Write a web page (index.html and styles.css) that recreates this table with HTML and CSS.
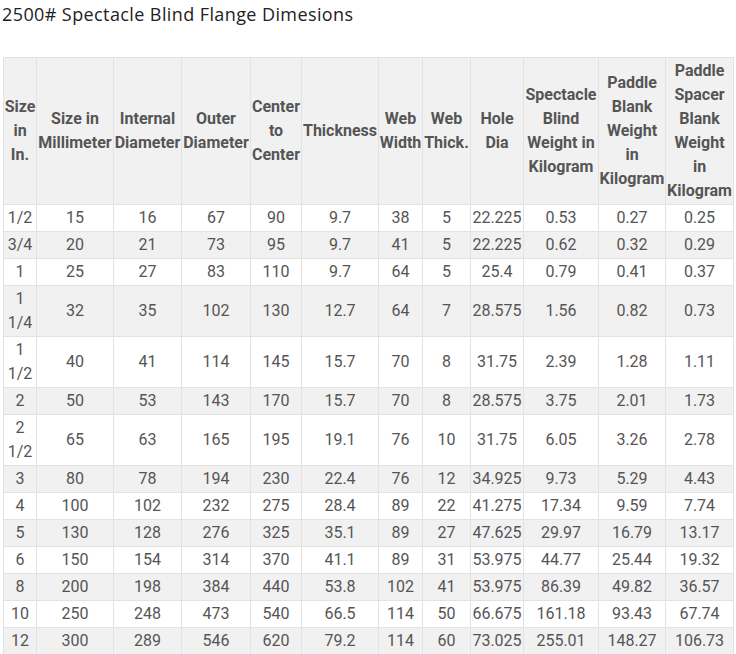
FILE: index.html
```html
<!DOCTYPE html>
<html>
<head>
<meta charset="utf-8">
<link rel="stylesheet" href="styles.css">
</head>
<body>
<h3 class="title">2500# Spectacle Blind Flange Dimesions</h3>
<table class="dims">
<colgroup>
<col class="c1"><col class="c2"><col class="c3"><col class="c4"><col class="c5"><col class="c6"><col class="c7"><col class="c8"><col class="c9"><col class="c10"><col class="c11"><col class="c12">
</colgroup>
<thead>
<tr>
<th>Size<br>in<br>In.</th>
<th>Size in<br>Millimeter</th>
<th>Internal<br>Diameter</th>
<th>Outer<br>Diameter</th>
<th>Center<br>to<br>Center</th>
<th>Thickness</th>
<th>Web<br>Width</th>
<th>Web<br>Thick.</th>
<th>Hole<br>Dia</th>
<th>Spectacle<br>Blind<br>Weight in<br>Kilogram</th>
<th>Paddle<br>Blank<br>Weight<br>in<br>Kilogram</th>
<th>Paddle<br>Spacer<br>Blank<br>Weight<br>in<br>Kilogram</th>
</tr>
</thead>
<tbody>
<tr><td>1/2</td><td>15</td><td>16</td><td>67</td><td>90</td><td>9.7</td><td>38</td><td>5</td><td>22.225</td><td>0.53</td><td>0.27</td><td>0.25</td></tr>
<tr><td>3/4</td><td>20</td><td>21</td><td>73</td><td>95</td><td>9.7</td><td>41</td><td>5</td><td>22.225</td><td>0.62</td><td>0.32</td><td>0.29</td></tr>
<tr><td>1</td><td>25</td><td>27</td><td>83</td><td>110</td><td>9.7</td><td>64</td><td>5</td><td>25.4</td><td>0.79</td><td>0.41</td><td>0.37</td></tr>
<tr><td>1<br>1/4</td><td>32</td><td>35</td><td>102</td><td>130</td><td>12.7</td><td>64</td><td>7</td><td>28.575</td><td>1.56</td><td>0.82</td><td>0.73</td></tr>
<tr><td>1<br>1/2</td><td>40</td><td>41</td><td>114</td><td>145</td><td>15.7</td><td>70</td><td>8</td><td>31.75</td><td>2.39</td><td>1.28</td><td>1.11</td></tr>
<tr><td>2</td><td>50</td><td>53</td><td>143</td><td>170</td><td>15.7</td><td>70</td><td>8</td><td>28.575</td><td>3.75</td><td>2.01</td><td>1.73</td></tr>
<tr><td>2<br>1/2</td><td>65</td><td>63</td><td>165</td><td>195</td><td>19.1</td><td>76</td><td>10</td><td>31.75</td><td>6.05</td><td>3.26</td><td>2.78</td></tr>
<tr><td>3</td><td>80</td><td>78</td><td>194</td><td>230</td><td>22.4</td><td>76</td><td>12</td><td>34.925</td><td>9.73</td><td>5.29</td><td>4.43</td></tr>
<tr><td>4</td><td>100</td><td>102</td><td>232</td><td>275</td><td>28.4</td><td>89</td><td>22</td><td>41.275</td><td>17.34</td><td>9.59</td><td>7.74</td></tr>
<tr><td>5</td><td>130</td><td>128</td><td>276</td><td>325</td><td>35.1</td><td>89</td><td>27</td><td>47.625</td><td>29.97</td><td>16.79</td><td>13.17</td></tr>
<tr><td>6</td><td>150</td><td>154</td><td>314</td><td>370</td><td>41.1</td><td>89</td><td>31</td><td>53.975</td><td>44.77</td><td>25.44</td><td>19.32</td></tr>
<tr><td>8</td><td>200</td><td>198</td><td>384</td><td>440</td><td>53.8</td><td>102</td><td>41</td><td>53.975</td><td>86.39</td><td>49.82</td><td>36.57</td></tr>
<tr><td>10</td><td>250</td><td>248</td><td>473</td><td>540</td><td>66.5</td><td>114</td><td>50</td><td>66.675</td><td>161.18</td><td>93.43</td><td>67.74</td></tr>
<tr><td>12</td><td>300</td><td>289</td><td>546</td><td>620</td><td>79.2</td><td>114</td><td>60</td><td>73.025</td><td>255.01</td><td>148.27</td><td>106.73</td></tr>
</tbody>
</table>
</body>
</html>
```
FILE: styles.css
```css
html, body {
  margin: 0;
  padding: 0;
  background: #fff;
}
body {
  padding: 0 3px;
}
.title {
  margin: 0 0 0 -1px;
  padding: 4px 0 0 0;
  height: 57px;
  box-sizing: border-box;
  font-family: "Open Sans", "Noto Sans", sans-serif;
  font-weight: 400;
  font-size: 18px;
  letter-spacing: 0.4px;
  line-height: 20px;
  color: #222;
}
.dims {
  border-collapse: collapse;
  table-layout: fixed;
  width: 730px;
  font-family: Roboto, "Liberation Sans", sans-serif;
  font-size: 16px;
  line-height: 24px;
  color: #555;
}
.c1 { width: 33px; }
.c2 { width: 77px; }
.c3 { width: 68px; }
.c4 { width: 69px; }
.c5 { width: 51px; }
.c6 { width: 77px; }
.c7 { width: 44px; }
.c8 { width: 48px; }
.c9 { width: 53px; }
.c10 { width: 75px; }
.c11 { width: 67px; }
.c12 { width: 68px; }
.dims th, .dims td {
  border: 1px solid #e2e2e2;
  padding: 1px 0;
  text-align: center;
  vertical-align: middle;
}
.dims th {
  font-weight: 700;
  background: #f1f1f1;
  white-space: nowrap;
}
.dims tbody tr:nth-child(even) td {
  background: #f1f1f1;
}
.dims tbody tr:nth-child(odd) td {
  background: #fff;
}
```
